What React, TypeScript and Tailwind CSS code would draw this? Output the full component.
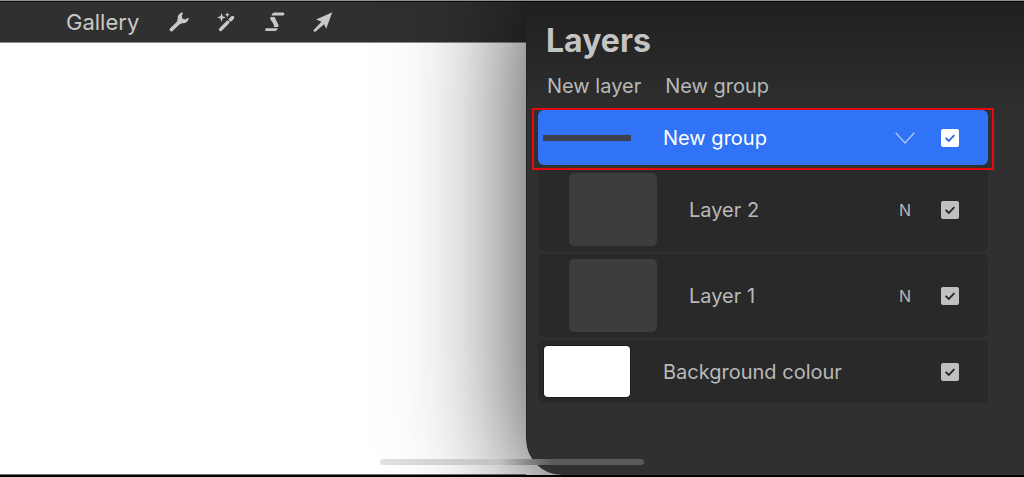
import React, { useState } from 'react';
import clsx from 'clsx';

interface Layer {
  id: string;
  name: string;
  kind: 'group' | 'layer' | 'background';
  mode?: string;
}

const LAYERS: Layer[] = [
  { id: 'group', name: 'New group', kind: 'group' },
  { id: 'layer-2', name: 'Layer 2', kind: 'layer', mode: 'N' },
  { id: 'layer-1', name: 'Layer 1', kind: 'layer', mode: 'N' },
  { id: 'background', name: 'Background colour', kind: 'background' },
];

const WrenchIcon = () => (
  <svg viewBox="0 0 20 20" className="size-5" fill="none" aria-hidden="true">
    <path d="M2.4 17.6 11 9.4" stroke="currentColor" strokeWidth="3.6" strokeLinecap="round" />
    <path
      d="M13.4.5c-3 .6-5.200 3.400-4.600 6.500L7.800 9.400l2.900 2.900 2.300-1.100c3.300.5 6.200-1.700 6.700-5l-.6-.5-3.100 1.800-2.600-1-.6-2.700 1.300-2.700z"
      fill="currentColor"
    />
  </svg>
);

const WandIcon = () => (
  <svg viewBox="0 0 20 20" className="size-5" fill="none" aria-hidden="true">
    <path d="M3.6 17.5 10.8 10.3" stroke="currentColor" strokeWidth="3.4" strokeLinecap="round" />
    <path d="m12.4 8.7 3-3" stroke="currentColor" strokeWidth="3.4" />
    <path d="m14.400 6.700 1.200-1.200" stroke="currentColor" strokeWidth="3.4" strokeLinecap="round" />
    <path d="m4.5.9 1.100 3.400L9 5.400 5.600 6.500 4.500 9.900 3.400 6.500 0 5.400l3.400-1.100z" fill="currentColor" />
    <path d="m10.300.2.7 1.800 1.800.7-1.800.7-.7 1.800-.7-1.800-1.800-.7L9.600 2z" fill="currentColor" />
  </svg>
);

const SelectionIcon = () => (
  <svg viewBox="0 0 20 20" className="size-5" fill="currentColor" aria-hidden="true">
    <path d="M9.8.5h8.100a1.400 1.400 0 0 1 0 2.900H6.500C6.900 1.700 8 .5 9.800.5z" />
    <path d="M5.500 5h4.100l3.700 7.500c.4.900.2 1.700-.3 2.500L8.400 15c.8-.9.900-1.600.4-2.600L6 8.300C5.300 7.200 5.100 6.200 5.500 5z" />
    <path d="M1.6 16.200h11.300c-.6 1.700-1.800 2.900-3.900 2.900H1.600a1.400 1.400 0 0 1 0-2.900z" />
  </svg>
);

const TransformIcon = () => (
  <svg viewBox="0 0 20 20" className="size-5" aria-hidden="true">
    <path d="M19.300.2 13.200 16.700l-2.100-4.500-8.500 7.200a1.100 1.100 0 0 1-1.700-1.600l7.600-8.100-5.400-2.100z" fill="currentColor" />
  </svg>
);

const TOOLS = [
  { label: 'Actions', Icon: WrenchIcon },
  { label: 'Adjustments', Icon: WandIcon },
  { label: 'Selection', Icon: SelectionIcon },
  { label: 'Transform', Icon: TransformIcon },
];

interface LayerRowProps {
  layer: Layer;
  visible: boolean;
  onToggle: (id: string) => void;
}

const LayerRow: React.FC<LayerRowProps> = ({ layer, visible, onToggle }) => {
  const isGroup = layer.kind === 'group';

  return (
    <li
      className={clsx(
        'relative flex items-center rounded-md pr-[29px]',
        isGroup && 'z-10 h-[55px] bg-[#3073f6] pl-[5px] text-white',
        layer.kind === 'layer' && 'h-[83px] bg-[#292929] pl-[31px]',
        layer.kind === 'background' && 'h-[63px] bg-[#292929] pl-[6px]'
      )}
    >
      {isGroup && <span className="mr-8 h-[6px] w-[88px] bg-[#3a404e]" />}
      {layer.kind === 'layer' && <span className="mr-8 h-[73px] w-[88px] rounded-[5px] bg-[#3d3d3d]" />}
      {layer.kind === 'background' && <span className="mr-[33px] h-[51px] w-[86px] rounded bg-white ring-1 ring-[#1c1c1c]" />}

      <label htmlFor={layer.id} className="flex-1">{layer.name}</label>

      {isGroup && (
        <button type="button" aria-label="Collapse group" className="mr-[18px] flex w-9 justify-center">
          <svg viewBox="0 0 20 12" className="h-3 w-5" fill="none" aria-hidden="true">
            <path d="m.7.7 9.3 10.3L19.3.7" stroke="#a9c8ff" strokeWidth="1.3" />
          </svg>
        </button>
      )}
      {layer.mode && (
        <button type="button" aria-label={`Blend mode of ${layer.name}`} className="mr-[18px] w-9 text-center text-base">
          {layer.mode}
        </button>
      )}

      <span className="grid size-[18px]">
        <input
          id={layer.id}
          type="checkbox"
          checked={visible}
          onChange={() => onToggle(layer.id)}
          className={clsx('col-start-1 row-start-1 size-[18px] appearance-none rounded-[2px]', isGroup ? 'bg-white' : 'bg-[#c0c0c0]')}
        />
        {visible && (
          <svg
            viewBox="0 0 18 18"
            className={clsx('pointer-events-none col-start-1 row-start-1 size-[18px]', isGroup ? 'text-[#3068d8]' : 'text-[#262626]')}
            fill="none"
            aria-hidden="true"
          >
            <path d="m4.6 8.8 3.2 3.2 5.6-5.8" stroke="currentColor" strokeWidth="1.8" />
          </svg>
        )}
      </span>

      {/* Callout around the selected group */}
      {isGroup && <span className="pointer-events-none absolute -inset-x-[6px] -top-[2px] -bottom-[5px] border-2 border-[#e30a10]" />}
    </li>
  );
};

export default function App() {
  const [hidden, setHidden] = useState<string[]>([]);

  const toggle = (id: string) => {
    setHidden(prev => (prev.includes(id) ? prev.filter(h => h !== id) : [...prev, id]));
  };

  return (
    <div className="relative flex min-h-screen flex-col overflow-hidden border-t border-b-2 border-t-[#8a8d8b] border-b-black bg-white font-['Inter','Liberation_Sans',sans-serif] text-[20px] leading-7 text-[#b8b8b8]">
      <div className="flex flex-1 border-t border-[#0c120f]">
        <div className="flex min-w-0 flex-1 flex-col">
          <header className="flex h-10 items-center bg-[#303030] pl-[66px] text-[#c8c8c8]">
            <button type="button" className="mr-[30px] text-[22px]">Gallery</button>
            <nav className="flex gap-7">
              {TOOLS.map(({ label, Icon }) => (
                <button key={label} type="button" aria-label={label}>
                  <Icon />
                </button>
              ))}
            </nav>
          </header>
          <main className="flex-1 border-y border-t-[#8f8f8f] border-b-[#777]" />
        </div>

        <aside className="w-[498px] rounded-bl-[36px] border-l border-[#222] bg-linear-to-b from-[#202020] to-[#303030] to-25% pr-9 pl-[11px] shadow-[40px_0_130px_40px_rgba(0,0,0,0.8)]">
          <h1 className="pt-[19px] pl-2 text-[32px] leading-10 font-bold text-[#c4c4c4]">Layers</h1>
          <div className="mt-[11px] mb-[10px] flex gap-6 pl-[9px]">
            <button type="button">New layer</button>
            <button type="button">New group</button>
          </div>
          <ul className="flex flex-col gap-[3px]">
            {LAYERS.map(layer => (
              <LayerRow key={layer.id} layer={layer} visible={!hidden.includes(layer.id)} onToggle={toggle} />
            ))}
          </ul>
        </aside>
      </div>

      {/* Home indicator floats above the canvas and the panel */}
      <div className="absolute bottom-[10px] left-1/2 h-[6px] w-[264px] -translate-x-1/2 rounded-full bg-linear-to-r from-[#e2e2e2] via-[#c2c2c2] via-45% to-[#5a5a5a] to-65%" />
    </div>
  );
}
